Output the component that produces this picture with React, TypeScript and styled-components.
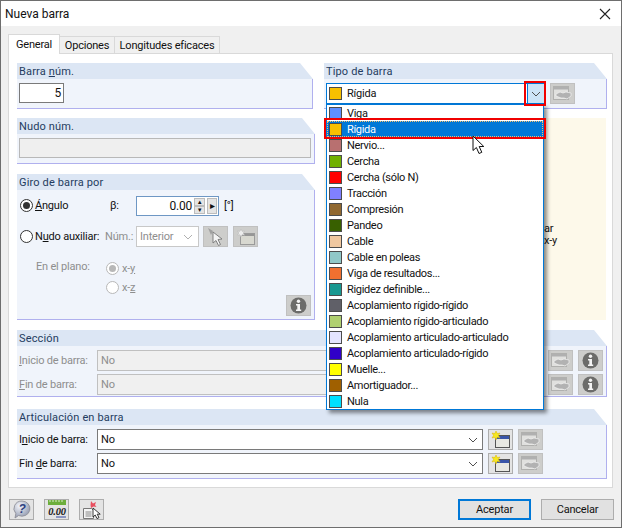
import React from "react";
import styled, { createGlobalStyle } from "styled-components";

const barTypes = [
  { name: "Viga", color: "#5f90ff" },
  { name: "Rígida", color: "#f8c000", selected: true },
  { name: "Nervio...", color: "#b87070" },
  { name: "Cercha", color: "#70b000" },
  { name: "Cercha (sólo N)", color: "#ff0000" },
  { name: "Tracción", color: "#8080ff" },
  { name: "Compresión", color: "#906830" },
  { name: "Pandeo", color: "#386000" },
  { name: "Cable", color: "#f0c8a0" },
  { name: "Cable en poleas", color: "#90c8c8" },
  { name: "Viga de resultados...", color: "#f07030" },
  { name: "Rigidez definible...", color: "#189890" },
  { name: "Acoplamiento rígido-rígido", color: "#606068" },
  { name: "Acoplamiento rígido-articulado", color: "#b0d070" },
  { name: "Acoplamiento articulado-articulado", color: "#e4e4ff" },
  { name: "Acoplamiento articulado-rígido", color: "#3000c8" },
  { name: "Muelle...", color: "#ffff00" },
  { name: "Amortiguador...", color: "#a06000" },
  { name: "Nula", color: "#00e0ff" },
];

const Chevron = ({ color = "#505050" }: { color?: string }) => (
  <svg width="10" height="6" viewBox="0 0 10 6">
    <path d="M1 1l4 4 4-4" fill="none" stroke={color} strokeWidth="1" />
  </svg>
);

const ShareIcon = () => (
  <svg width="19" height="15" viewBox="0 0 19 15">
    <rect x="0.5" y="0.5" width="15" height="13" fill="#e0e0de" stroke="#b0b0ae" />
    <rect x="1" y="1" width="14" height="2.5" fill="#b0b0b0" />
    <path d="M3 8l4-2 3 1 3-1 5 1v3l-4 3-3-1-3 0-5-2z" fill="#b2b2b2" stroke="#f2f2f2" strokeWidth="0.7" />
  </svg>
);

const InfoIcon = () => (
  <svg width="17" height="17" viewBox="0 0 17 17">
    <circle cx="8.5" cy="8.5" r="8" fill="#6c6c6a" />
    <circle cx="8.5" cy="4.2" r="1.7" fill="#f4f4f4" />
    <path d="M6 7h4v5.5h1.2V14H6v-1.5h1.3V8.4H6z" fill="#f4f4f4" />
  </svg>
);

const NewIcon = () => (
  <svg width="20" height="18" viewBox="0 0 20 18">
    <rect x="4.5" y="4.5" width="14" height="12" fill="#e8e8e2" stroke="#555" />
    <rect x="5" y="5" width="13" height="3" fill="#3a55a8" />
    <path d="M5 0l1.3 2.6L9 2 7.4 4.4 9 7 6.2 6.3 5 9 3.8 6.3 1 7l1.6-2.6L1 2l2.7.6z" fill="#f6e820" stroke="#d8b000" strokeWidth="0.5" />
  </svg>
);

const NewIconOff = () => (
  <svg width="20" height="18" viewBox="0 0 20 18">
    <rect x="4.5" y="5.5" width="14" height="11" fill="#d8d8d0" stroke="#9a9a9a" />
    <rect x="5" y="6" width="13" height="2" fill="#969696" />
    <path d="M5 1l1.2 2.4L8.6 3 7.2 5l1.4 2.2-2.4-.5L5 9 3.8 6.7l-2.4.5L2.8 5 1.4 3l2.4.4z" fill="#ececec" stroke="#b4b4b4" strokeWidth="0.5" />
  </svg>
);

const PickIcon = () => (
  <svg width="18" height="19" viewBox="0 0 18 19">
    <path d="M1 1l5 3-2 4z" fill="#a0a0a0" />
    <path d="M6 5v11l3-2.5 2.5 5 2-1-2.5-5 4-.5z" fill="#f4f4f4" stroke="#777" strokeWidth="0.9" />
  </svg>
);

const CursorIcon = () => (
  <svg width="15" height="20" viewBox="0 0 15 20">
    <path d="M1 1v14.5l3.4-3 2.6 6 2.8-1.2-2.6-5.8h4.6z" fill="#fff" stroke="#111" strokeWidth="1" />
  </svg>
);

const HelpIcon = () => (
  <svg width="18" height="19" viewBox="0 0 18 19">
    <defs>
      <radialGradient id="helpBall" cx="35%" cy="30%" r="75%">
        <stop offset="0" stopColor="#f4f6fb" />
        <stop offset="1" stopColor="#8e96ac" />
      </radialGradient>
    </defs>
    <path d="M9 1a8 7.6 0 1 1-3.4 14.5L2 18l.8-4.5A8 7.6 0 0 1 9 1z" fill="url(#helpBall)" stroke="#8a8a92" strokeWidth="0.8" />
    <text x="9" y="13" textAnchor="middle" fontFamily="Liberation Sans" fontStyle="italic" fontWeight="700" fontSize="12" fill="#2c3f80">?</text>
  </svg>
);

const UnitsIcon = () => (
  <svg width="20" height="19" viewBox="0 0 20 19">
    <rect x="1" y="0" width="18" height="5" fill="#6cae3c" />
    <path d="M3 0v2M6 0v2M9 0v2M12 0v2M15 0v2" stroke="#d8ecc8" strokeWidth="1" />
    <text x="10" y="15" textAnchor="middle" fontFamily="Liberation Serif" fontStyle="italic" fontWeight="700" fontSize="10.5" fill="#1a1a20">0.00</text>
    <path d="M9 17h10" stroke="#3048a0" strokeWidth="1" />
  </svg>
);

const DocPickIcon = () => (
  <svg width="20" height="20" viewBox="0 0 20 20">
    <path d="M1.5 8.5h8l2 2v8h-10z" fill="#f4f4f4" stroke="#777" />
    <path d="M3.5 12h6M3.5 14h6M3.5 16h6" stroke="#888" strokeWidth="1" />
    <path d="M9 1l2 2.5L14 2l-1 3 1.5 2-3-.5L9 8l-.5-3z" fill="#e85060" />
    <path d="M11 8v9l2.2-2 1.8 3.6 2-1-1.8-3.4h3z" fill="#fff" stroke="#222" strokeWidth="0.9" />
  </svg>
);

const App = () => {
  return (
    <>
      <GlobalStyle />
      <Window>
        <TitleBar>
          <Title>Nueva barra</Title>
          <CloseIcon width="12" height="12" viewBox="0 0 12 12">
            <path d="M1 1l10 10M11 1L1 11" stroke="#222" strokeWidth="1.1" />
          </CloseIcon>
        </TitleBar>

        <DialogBody>
          <TabStrip>
            <Tab $active $width={52}>General</Tab>
            <Tab $width={55}>Opciones</Tab>
            <Tab $width={105}>Longitudes eficaces</Tab>
          </TabStrip>

          <TabPanel>
            <Columns>
              <Column>
                <Group $inset={2}>
                  <GroupTitle>Barra <u>n</u>úm.</GroupTitle>
                  <GroupBody $height={30}>
                    <NumberInput>5</NumberInput>
                  </GroupBody>
                </Group>

                <Group>
                  <GroupTitle>Nudo núm.</GroupTitle>
                  <GroupBody $height={30}>
                    <EmptyInput />
                  </GroupBody>
                </Group>

                <Group $top={1}>
                  <GroupTitle>Giro de barra por</GroupTitle>
                  <GiroBody>
                    <GiroRow>
                      <Radio $checked />
                      <RadioLabel $width={75}><u>Á</u>ngulo</RadioLabel>
                      <BetaLabel>β:</BetaLabel>
                      <AngleInput>
                        <AngleValue>0.00</AngleValue>
                        <SpinPair>
                          <SpinButton>▲</SpinButton>
                          <SpinButton>▼</SpinButton>
                        </SpinPair>
                        <ArrowButton>▸</ArrowButton>
                      </AngleInput>
                      <UnitLabel>[°]</UnitLabel>
                    </GiroRow>

                    <GiroRow>
                      <Radio />
                      <RadioLabel $width={70}>N<u>u</u>do auxiliar:</RadioLabel>
                      <DisabledText $width={31}>Núm.:</DisabledText>
                      <DisabledSelect>
                        Interior
                        <Chevron color="#b0b0b0" />
                      </DisabledSelect>
                      <IconButton $disabled><PickIcon /></IconButton>
                      <IconButton $disabled><NewIconOff /></IconButton>
                    </GiroRow>

                    <PlaneRow>
                      <PlaneLabel>En el plano:</PlaneLabel>
                      <PlaneOptions>
                        <PlaneOption>
                          <Radio $checked $disabled />
                          <span>x-<u>y</u></span>
                        </PlaneOption>
                        <PlaneOption>
                          <Radio $disabled />
                          <span>x-<u>z</u></span>
                        </PlaneOption>
                      </PlaneOptions>
                      <IconButton $disabled $end><InfoIcon /></IconButton>
                    </PlaneRow>
                  </GiroBody>
                </Group>
              </Column>

              <Column>
                <Group>
                  <GroupTitle>Tipo de barra</GroupTitle>
                  <GroupBody $height={30}>
                    <TypeRow>
                      <TypeCombo>
                        <ComboValue>
                          <Swatch $color="#f8c000" />
                          Rígida
                        </ComboValue>
                        <ComboButton><Chevron /></ComboButton>
                      </TypeCombo>
                      <IconButton $disabled><ShareIcon /></IconButton>
                    </TypeRow>
                  </GroupBody>
                </Group>

                <Preview>
                  <PreviewNote>ar</PreviewNote>
                  <PreviewNote>x-y</PreviewNote>
                </Preview>
              </Column>
            </Columns>

            <Group>
              <GroupTitle>Sección</GroupTitle>
              <SectionBody>
                <FormRow>
                  <FormLabel $disabled><u>I</u>nicio de barra:</FormLabel>
                  <FlatInput>No</FlatInput>
                  <IconButton $disabled><ShareIcon /></IconButton>
                  <IconButton $disabled><InfoIcon /></IconButton>
                </FormRow>
                <FormRow>
                  <FormLabel $disabled><u>F</u>in de barra:</FormLabel>
                  <FlatInput>No</FlatInput>
                  <IconButton $disabled><ShareIcon /></IconButton>
                  <IconButton $disabled><InfoIcon /></IconButton>
                </FormRow>
              </SectionBody>
            </Group>

            <Group $top={12}>
              <GroupTitle>Articulación en barra</GroupTitle>
              <HingeBody>
                <HingeRow>
                  <FormLabel>I<u>n</u>icio de barra:</FormLabel>
                  <SelectBox>No<Chevron /></SelectBox>
                  <IconButton><NewIcon /></IconButton>
                  <IconButton $disabled><ShareIcon /></IconButton>
                </HingeRow>
                <HingeRow>
                  <FormLabel>Fin <u>d</u>e barra:</FormLabel>
                  <SelectBox>No<Chevron /></SelectBox>
                  <IconButton><NewIcon /></IconButton>
                  <IconButton $disabled><ShareIcon /></IconButton>
                </HingeRow>
              </HingeBody>
            </Group>
          </TabPanel>

          <Footer>
            <FooterTools>
              <IconButton><HelpIcon /></IconButton>
              <IconButton><UnitsIcon /></IconButton>
              <IconButton><DocPickIcon /></IconButton>
            </FooterTools>
            <FooterActions>
              <DialogButton $primary>Aceptar</DialogButton>
              <DialogButton>Cancelar</DialogButton>
            </FooterActions>
          </Footer>
        </DialogBody>

        <DropList>
          {barTypes.map((item) => (
            <DropItem key={item.name} $selected={item.selected}>
              <Swatch $color={item.color} />
              {item.name}
            </DropItem>
          ))}
        </DropList>
        <RedBoxButton />
        <RedBoxRow />
        <Pointer><CursorIcon /></Pointer>
      </Window>
    </>
  );
};

export default App;

const GlobalStyle = createGlobalStyle`
  html, body {
    margin: 0;
    padding: 0;
    background: #f0f0f0;
  }

  * {
    box-sizing: border-box;
  }

  body {
    font-family: Roboto, "Noto Sans", sans-serif;
    font-size: 11px;
    letter-spacing: -0.2px;
    color: #111;
  }
`;

const Window = styled.div`
  position: relative;
  display: flex;
  flex-direction: column;
  width: 622px;
  height: 528px;
  border: 1px solid #6e6e6e;
  background: #f0f0f0;
  overflow: hidden;
`;

const TitleBar = styled.div`
  display: flex;
  align-items: center;
  justify-content: space-between;
  height: 25px;
  padding: 0 10px 0 4px;
  background: #fff;
  flex: none;
`;

const Title = styled.span`
  font-size: 12px;
  letter-spacing: 0;
  color: #111;
`;

const CloseIcon = styled.svg`
  display: block;
`;

const DialogBody = styled.div`
  display: flex;
  flex-direction: column;
  flex: 1;
  padding: 8px 8px 0 7px;
`;

const TabStrip = styled.div`
  display: flex;
  align-items: flex-end;
  height: 20px;
  position: relative;
  z-index: 1;
  margin-bottom: -1px;
`;

const Tab = styled.div<{ $active?: boolean; $width: number }>`
  display: flex;
  align-items: center;
  justify-content: center;
  width: ${(p) => p.$width}px;
  height: ${(p) => (p.$active ? "20px" : "18px")};
  background: ${(p) => (p.$active ? "#fff" : "#f0f0f0")};
  border: 1px solid #d9d9d9;
  border-left-width: ${(p) => (p.$active ? "1px" : "0")};
  border-bottom: ${(p) => (p.$active ? "0" : "1px solid #d9d9d9")};
`;

const TabPanel = styled.div`
  display: flex;
  flex-direction: column;
  height: 435px;
  padding: 9px 5px 0 8px;
  background: #fff;
  border: 1px solid #d9d9d9;
`;

const Columns = styled.div`
  display: grid;
  grid-template-columns: 298px 283px;
  column-gap: 9px;
  margin-bottom: 10px;
  height: 257px;
`;

const Column = styled.div`
  display: flex;
  flex-direction: column;
  gap: 9px;
`;

const Group = styled.section<{ $inset?: number; $top?: number }>`
  margin-right: ${(p) => p.$inset || 0}px;
  margin-top: ${(p) => p.$top || 0}px;
`;

const GroupTitle = styled.div`
  height: 16px;
  padding-left: 2px;
  line-height: 17px;
  letter-spacing: 0.15px;
  color: #243c60;
  background: #dce6f4;
  clip-path: polygon(0 0, calc(100% - 13px) 0, 100% 100%, 0 100%);
`;

const GroupBody = styled.div<{ $height?: number }>`
  height: ${(p) => p.$height}px;
  padding: 4px 2px 0;
  background: #f0f4fb;
  border-right: 1px solid #b0b0ee;
  border-bottom: 1px solid #b0b0ee;
`;

const NumberInput = styled.div`
  width: 45px;
  height: 20px;
  padding-right: 2px;
  line-height: 18px;
  font-size: 12px;
  text-align: right;
  background: #fff;
  border: 1px solid #7a7a7a;
`;

const EmptyInput = styled.div`
  height: 20px;
  margin-right: 1px;
  background: #efefef;
  border: 1px solid #b8b8b8;
`;

const GiroBody = styled(GroupBody)`
  height: 130px;
  padding: 5px 2px 3px 2px;
  display: flex;
  flex-direction: column;
`;

const GiroRow = styled.div`
  display: flex;
  align-items: center;
  height: 21px;
  margin-bottom: 10px;
  padding-left: 1px;
`;

const Radio = styled.span<{ $checked?: boolean; $disabled?: boolean }>`
  display: inline-flex;
  align-items: center;
  justify-content: center;
  flex: none;
  width: 13px;
  height: 13px;
  border-radius: 50%;
  background: #fff;
  border: 1px solid ${(p) => (p.$disabled ? "#b8b8b8" : "#333")};

  &::after {
    content: "";
    display: ${(p) => (p.$checked ? "block" : "none")};
    width: 7px;
    height: 7px;
    border-radius: 50%;
    background: ${(p) => (p.$disabled ? "#b8b8b8" : "#333")};
  }
`;

const RadioLabel = styled.span<{ $width: number }>`
  width: ${(p) => p.$width}px;
  margin-left: 2px;
  flex: none;
  white-space: nowrap;
`;

const BetaLabel = styled.span`
  width: 26px;
  flex: none;
`;

const AngleInput = styled.div`
  display: flex;
  align-items: center;
  width: 83px;
  height: 20px;
  background: #fff;
  border: 1px solid #6e97c4;
  padding: 1px;
`;

const AngleValue = styled.span`
  flex: 1;
  padding-right: 2px;
  font-size: 12px;
  text-align: right;
`;

const SpinPair = styled.div`
  display: flex;
  flex-direction: column;
  width: 11px;
  height: 16px;
`;

const SpinButton = styled.div`
  height: 8px;
  font-size: 6px;
  line-height: 6px;
  text-align: center;
  background: #e4e4e4;
  border: 1px solid #bcbcbc;
`;

const ArrowButton = styled.div`
  width: 10px;
  height: 16px;
  margin-left: 2px;
  font-size: 10px;
  line-height: 14px;
  text-align: center;
  background: #e4e4e4;
  border: 1px solid #bcbcbc;
`;

const UnitLabel = styled.span`
  margin-left: 5px;
`;

const DisabledText = styled.span<{ $width: number }>`
  width: ${(p) => p.$width}px;
  flex: none;
  color: #8e8e8e;
  white-space: nowrap;
`;

const DisabledSelect = styled.div`
  display: flex;
  align-items: center;
  justify-content: space-between;
  width: 63px;
  height: 21px;
  padding: 0 5px 0 3px;
  color: #8e8e8e;
  background: #fff;
  border: 1px solid #c8c8c8;
  margin-right: 4px;
  flex: none;
`;

const IconButton = styled.div<{ $disabled?: boolean; $end?: boolean }>`
  display: flex;
  align-items: center;
  justify-content: center;
  flex: none;
  width: 25px;
  height: 21px;
  background: ${(p) => (p.$disabled ? "#cdcdcb" : "#e4e4e4")};
  border: 1px solid ${(p) => (p.$disabled ? "#c0c0c0" : "#adadad")};
  overflow: hidden;

  ${(p) => p.$end && "align-self: flex-end; margin-left: auto;"}
  ${GiroRow} & + & {
    margin-left: 5px;
  }
`;

const PlaneRow = styled.div`
  display: flex;
  flex: 1;
  min-height: 0;
  padding-right: 1px;
`;

const PlaneLabel = styled.span`
  width: 87px;
  padding: 3px 0 0 17px;
  color: #8e8e8e;
  flex: none;
`;

const PlaneOptions = styled.div`
  display: flex;
  flex-direction: column;
  gap: 6px;
  padding-top: 5px;
`;

const PlaneOption = styled.label`
  display: flex;
  align-items: center;
  gap: 3px;
  height: 13px;
  color: #8e8e8e;
`;

const TypeRow = styled.div`
  display: flex;
  align-items: flex-start;
  gap: 5px;
`;

const TypeCombo = styled.div`
  display: flex;
  width: 219px;
  height: 21px;
  background: #fff;
  border: 1px solid #0078d7;
`;

const ComboValue = styled.div`
  flex: 1;
  display: flex;
  align-items: center;
  gap: 5px;
  padding-left: 2px;
`;

const ComboButton = styled.div`
  display: flex;
  align-items: center;
  justify-content: center;
  width: 17px;
  background: #cce4f7;
  border-left: 1px solid #0078d7;
`;

const Swatch = styled.span<{ $color: string }>`
  flex: none;
  width: 13px;
  height: 13px;
  background: ${(p) => p.$color};
  border: 1px solid #4c4c4c;
`;

const Preview = styled.div`
  display: flex;
  flex-direction: column;
  align-items: flex-start;
  justify-content: flex-end;
  flex: 1;
  padding: 0 0 73px 220px;
  margin-right: 1px;
  background: #fdf9ea;
`;

const PreviewNote = styled.span`
  line-height: 12px;
`;

const SectionBody = styled(GroupBody)`
  height: 51px;
  padding: 4px 3px 0 2px;
`;

const FormRow = styled.div`
  display: flex;
  align-items: center;
  gap: 5px;
  height: 21px;
  margin-bottom: 3px;
`;

const FormLabel = styled.span<{ $disabled?: boolean }>`
  width: 78px;
  flex: none;
  margin-right: -5px;
  color: ${(p) => (p.$disabled ? "#8e8e8e" : "#111")};
  white-space: nowrap;
`;

const FlatInput = styled.div`
  flex: 1;
  height: 21px;
  padding-left: 3px;
  line-height: 19px;
  color: #8e8e8e;
  background: #f0f0f0;
  border: 1px solid #c0c0c0;
`;

const HingeBody = styled(GroupBody)`
  height: 54px;
  padding: 4px 63px 0 2px;
`;

const HingeRow = styled(FormRow)`
  margin-bottom: 3px;
`;

const SelectBox = styled.div`
  display: flex;
  align-items: center;
  justify-content: space-between;
  flex: 1;
  height: 21px;
  padding: 0 4px 0 3px;
  background: #fff;
  border: 1px solid #7a7a7a;
`;

const Footer = styled.div`
  display: flex;
  align-items: center;
  justify-content: space-between;
  height: 21px;
  margin-top: 11px;
`;

const FooterTools = styled.div`
  display: flex;
  gap: 10px;
  padding-left: 1px;
`;

const FooterActions = styled.div`
  display: flex;
  gap: 10px;
  margin-right: -1px;
`;

const DialogButton = styled.div<{ $primary?: boolean }>`
  display: flex;
  align-items: center;
  justify-content: center;
  width: 73px;
  height: 21px;
  background: #e1e1e1;
  border: ${(p) => (p.$primary ? "2px solid #0078d7" : "1px solid #adadad")};
`;

const DropList = styled.div`
  position: absolute;
  left: 325px;
  top: 103px;
  width: 218px;
  letter-spacing: -0.32px;
  background: #fff;
  border: 1px solid #0078d7;
  box-shadow: 3px 3px 4px rgba(0, 0, 0, 0.45);
`;

const DropItem = styled.div<{ $selected?: boolean }>`
  display: flex;
  align-items: center;
  gap: 5px;
  height: 16px;
  padding-left: 2px;
  white-space: nowrap;
  color: ${(p) => (p.$selected ? "#fff" : "#111")};
  background: ${(p) => (p.$selected ? "#0078d7" : "transparent")};
  outline: ${(p) => (p.$selected ? "1px dotted #f0c070" : "none")};
  outline-offset: -1px;
`;

const RedBoxButton = styled.div`
  position: absolute;
  left: 523px;
  top: 80px;
  width: 22px;
  height: 25px;
  border: 2px solid #f00000;
`;

const RedBoxRow = styled.div`
  position: absolute;
  left: 323px;
  top: 117px;
  width: 222px;
  height: 21px;
  border: 2px solid #f00000;
`;

const Pointer = styled.div`
  position: absolute;
  left: 471px;
  top: 134px;
  line-height: 0;
`;
